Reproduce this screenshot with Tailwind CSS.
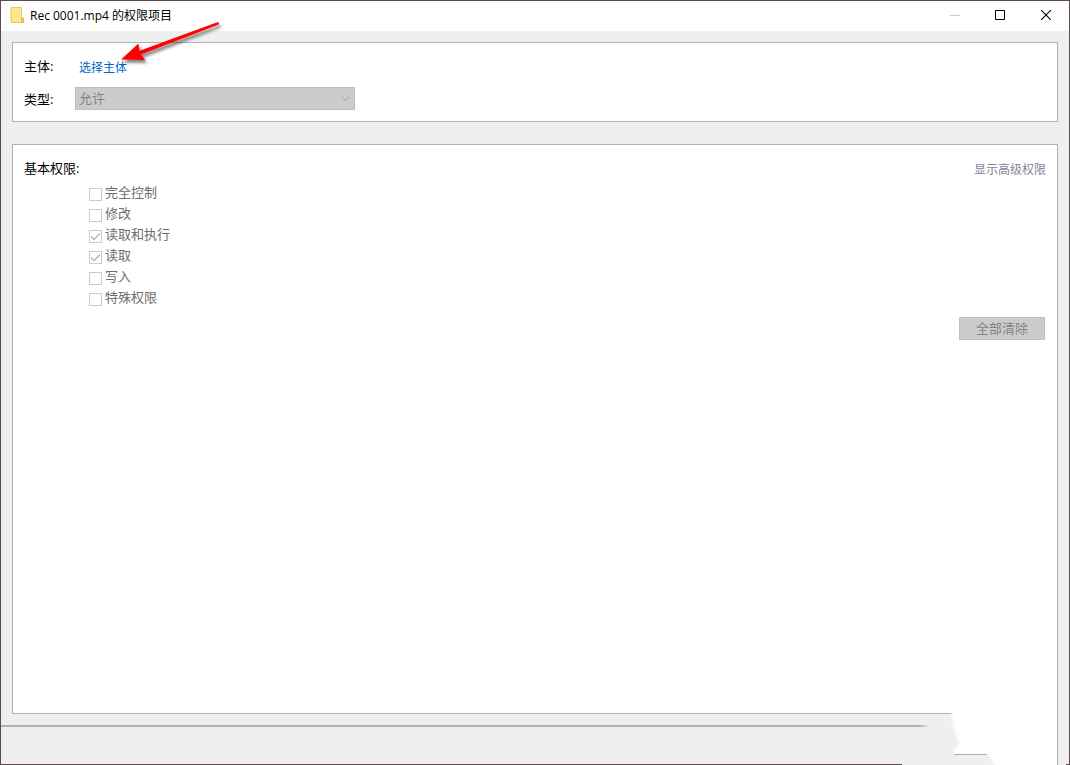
<!DOCTYPE html>
<html lang="zh-CN">
<head>
  <meta charset="UTF-8">
  <meta name="viewport" content="width=device-width, initial-scale=1.0">
  <title>Rec 0001.mp4 的权限项目</title>
  <script src="https://cdn.jsdelivr.net/npm/@tailwindcss/browser@4"></script>
</head>
<body class="bg-white text-black text-[13px] leading-5 font-['Open_Sans','Noto_Sans_CJK_SC',sans-serif]">
  <div class="relative flex min-h-screen flex-col border border-[#5b4b50] bg-[#efefef]">

    <!-- Title bar -->
    <header class="flex h-[30px] items-start justify-between bg-white pl-[9px]">
      <div class="flex h-7 items-center gap-[6px]">
        <svg class="h-4 w-[14px]" viewBox="0 0 14 16">
          <path d="M1 0.5H11.5V10.5L13.5 11V15.5H1Z" fill="#ffe78f" stroke="#e6c765"/>
          <path d="M11.5 15V11.5H13.5V15.5H10.5Z" fill="#fbdc7a" stroke="#dcb74f"/>
        </svg>
        <h1 class="pt-px text-xs">Rec 0001.mp4 的权限项目</h1>
      </div>
      <div class="flex">
        <button type="button" aria-label="最小化" disabled class="flex h-7 w-[44px] items-center justify-center">
          <svg class="h-[10px] w-[10px]" viewBox="0 0 10 10"><path d="M0 5.5H10" stroke="#cccccc"/></svg>
        </button>
        <button type="button" aria-label="最大化" class="flex h-7 w-[46px] items-center justify-center">
          <svg class="h-[10px] w-[10px]" viewBox="0 0 10 10"><path d="M0.5 0.5H9.5V9.5H0.5Z" fill="none" stroke="#000"/></svg>
        </button>
        <button type="button" aria-label="关闭" class="flex h-7 w-[46px] items-center justify-center">
          <svg class="h-[10px] w-[10px]" viewBox="0 0 10 10"><path d="M0 0L10 10M10 0L0 10" stroke="#000" stroke-width="1.1"/></svg>
        </button>
      </div>
    </header>

    <main class="flex grow flex-col gap-[22px] px-[11px] pt-[11px] pb-[11px]">
      <!-- Principal and type -->
      <section class="flex h-20 flex-col gap-[11px] border border-[#b0b0b0] bg-white px-[11px] pt-[13px]">
        <div class="flex items-center">
          <span class="w-[55px]">主体:</span>
          <a href="#" class="pt-1 text-xs text-[#0066cc]">选择主体</a>
        </div>
        <div class="flex items-center">
          <label for="type" class="w-[51px]">类型:</label>
          <div class="relative w-[280px]">
            <select id="type" disabled class="block h-[23px] w-full appearance-none border border-[#bfbfbf] bg-[#cccccc] px-[3px] pb-0.5 text-[#838383] opacity-100">
              <option>允许</option>
            </select>
            <svg class="absolute top-[9px] right-[5px] h-[6px] w-[9px]" viewBox="0 0 9 6"><path d="M0.5 0.5L4.5 4.5L8.5 0.5" fill="none" stroke="#a0a0a0"/></svg>
          </div>
        </div>
      </section>

      <!-- Basic permissions -->
      <section class="flex grow flex-col border border-[#b0b0b0] bg-white px-[11px] pt-[13px]">
        <div class="flex items-center justify-between">
          <h2>基本权限:</h2>
          <a href="#" class="pt-1 text-xs text-[#838399]">显示高级权限</a>
        </div>
        <div class="flex flex-col items-start pt-[6px] pl-[65px] leading-[17px] text-[#6d6d6d]">
          <label class="flex h-[21px] items-start gap-[3px]">
            <input type="checkbox" disabled class="mt-1 h-[13px] w-[13px] appearance-none border border-[#cccccc] bg-white">
            完全控制
          </label>
          <label class="flex h-[21px] items-start gap-[3px]">
            <input type="checkbox" disabled class="mt-1 h-[13px] w-[13px] appearance-none border border-[#cccccc] bg-white">
            修改
          </label>
          <label class="flex h-[21px] items-start gap-[3px]">
            <span class="relative mt-1 flex">
              <input type="checkbox" checked disabled class="h-[13px] w-[13px] appearance-none border border-[#cccccc] bg-white">
              <svg class="absolute inset-0 h-[13px] w-[13px]" viewBox="0 0 13 13"><path d="M2 6.5L5 9.5L11 3.5" fill="none" stroke="#b4b4b4" stroke-width="1.4"/></svg>
            </span>
            读取和执行
          </label>
          <label class="flex h-[21px] items-start gap-[3px]">
            <span class="relative mt-1 flex">
              <input type="checkbox" checked disabled class="h-[13px] w-[13px] appearance-none border border-[#cccccc] bg-white">
              <svg class="absolute inset-0 h-[13px] w-[13px]" viewBox="0 0 13 13"><path d="M2 6.5L5 9.5L11 3.5" fill="none" stroke="#b4b4b4" stroke-width="1.4"/></svg>
            </span>
            读取
          </label>
          <label class="flex h-[21px] items-start gap-[3px]">
            <input type="checkbox" disabled class="mt-1 h-[13px] w-[13px] appearance-none border border-[#cccccc] bg-white">
            写入
          </label>
          <label class="flex h-[21px] items-start gap-[3px]">
            <input type="checkbox" disabled class="mt-1 h-[13px] w-[13px] appearance-none border border-[#cccccc] bg-white">
            特殊权限
          </label>
        </div>
        <button type="button" disabled class="mt-[7px] mr-px flex h-[23px] w-[86px] items-center justify-center self-end border border-[#bfbfbf] bg-[#cccccc] pb-0.5 text-[#838383]">全部清除</button>
      </section>
    </main>

    <footer class="h-[39px] border-t-2 border-[#b0b0b0]"></footer>

    <!-- Red arrow pointing at the principal link -->
    <svg class="pointer-events-none absolute top-[14px] left-[109px] h-[60px] w-[125px]" viewBox="110 15 125 60">
      <defs>
        <filter id="arrowShadow" x="-20%" y="-30%" width="140%" height="180%">
          <feDropShadow dx="2" dy="3" stdDeviation="1.5" flood-color="#000" flood-opacity="0.5"/>
        </filter>
      </defs>
      <g filter="url(#arrowShadow)" fill="#ff0000">
        <path d="M218 22.500L218.700 24L141 54L139 51.500Z" stroke="#ff0000" stroke-linejoin="round"/>
        <path d="M121 59.500L138.500 43.500L139.500 52L145 60Z"/>
      </g>
    </svg>

    <!-- White erased corner -->
    <svg class="pointer-events-none absolute -right-px -bottom-px h-[75px] w-[210px]" viewBox="0 0 210 75">
      <defs>
        <filter id="soft" x="-10%" y="-10%" width="120%" height="120%"><feGaussianBlur stdDeviation="1"/></filter>
        <linearGradient id="fade"><stop offset="0" stop-color="#efefef" stop-opacity="0"/><stop offset="1" stop-color="#efefef"/></linearGradient>
        <clipPath id="edge"><path d="M0 0H197V75H0Z"/></clipPath>
      </defs>
      <path d="M60 35H70V37H60Z" fill="url(#fade)"/>
      <path d="M69 35H209V37H69Z" fill="#efefef"/>
      <path d="M42 74H206V75H42Z" fill="#efefef"/>
      <path d="M197 23H209V24H197Z" fill="#efefef"/>
      <g clip-path="url(#edge)">
        <path d="M90 15H205V85H138L134 73L128 64H92L99 54L95 42L93 34Z" fill="#fff" filter="url(#soft)"/>
      </g>
      <path d="M94 64.500H127" stroke="#b0b0b0"/>
      <path d="M197.500 0V75" stroke="#b0b0b0"/>
    </svg>
  </div>
</body>
</html>
